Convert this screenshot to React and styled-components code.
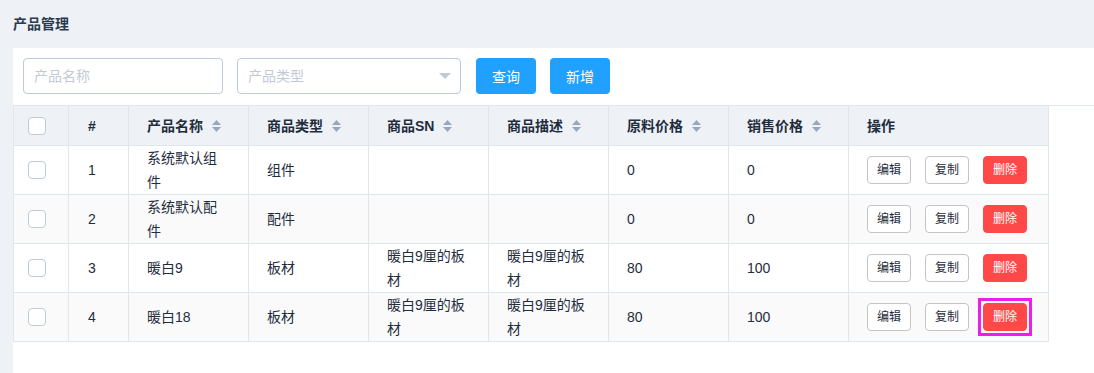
import React from "react";
import styled, { createGlobalStyle } from "styled-components";

const Global = createGlobalStyle`
  html, body { margin: 0; padding: 0; background: #eef1f6; }
  * { box-sizing: border-box; }
  body {
    font-family: "Liberation Sans", "Noto Sans CJK SC", sans-serif;
    color: #1f2d3d;
    font-size: 14px;
  }
`;

const Page = styled.div`
  padding-left: 13px;
  min-height: 100vh;
  display: flex;
  flex-direction: column;
`;

const Title = styled.h2`
  margin: 0;
  padding: 14px 0;
  font-size: 14px;
  line-height: 20px;
  font-weight: 700;
  color: #2b3a4d;
`;

const Panel = styled.div`
  flex: 1;
  background: #fff;
`;

const Toolbar = styled.div`
  display: flex;
  align-items: center;
  padding: 10px 10px 11px;
`;

const Field = styled.div`
  position: relative;
  width: ${(p) => p.$w}px;
  height: 36px;
  margin-right: ${(p) => p.$mr}px;
`;

const Input = styled.input`
  width: 100%;
  height: 100%;
  border: 1px solid #bfcbd9;
  border-radius: 4px;
  padding: 0 10px;
  font: inherit;
  font-size: 14px;
  color: #1f2d3d;
  outline: none;
  background: #fff;
  &::placeholder { color: #c3cad5; }
`;

const Caret = styled.svg`
  position: absolute;
  right: 10px;
  top: 15px;
`;

const PrimaryButton = styled.button`
  width: 60px;
  height: 36px;
  border: none;
  border-radius: 4px;
  background: #20a0ff;
  color: #fff;
  font: inherit;
  font-size: 14px;
  margin-right: 14px;
  padding: 0;
  cursor: pointer;
`;

const TableWrap = styled.div`
  border-top: 1px solid #dfe6ec;
`;

const Table = styled.table`
  border-collapse: separate;
  border-spacing: 0;
  table-layout: fixed;
  width: 1036px;
  border-left: 1px solid #dfe6ec;
`;

const Th = styled.th`
  width: ${(p) => p.$w}px;
  height: 40px;
  padding: 0 20px 0 ${(p) => p.$pl ?? 18}px;
  background: #eef1f6;
  border-right: 1px solid #dfe6ec;
  border-bottom: 1px solid #dfe6ec;
  text-align: left;
  font-weight: 700;
  font-size: 14px;
  line-height: 24px;
  color: #1f2d3d;
  white-space: nowrap;
`;

const HeadInner = styled.span`
  display: inline-flex;
  align-items: center;
  gap: 9px;
`;

const Tr = styled.tr`
  background: ${(p) => (p.$striped ? "#fafafa" : "#fff")};
`;

const Td = styled.td`
  height: 49px;
  padding: 0 20px 0 ${(p) => p.$pl ?? 18}px;
  border-right: 1px solid #dfe6ec;
  border-bottom: 1px solid #dfe6ec;
  font-size: 14px;
  line-height: 24px;
  color: #1f2d3d;
  vertical-align: middle;
  word-break: break-all;
`;

const Checkbox = styled.span`
  display: block;
  width: 18px;
  height: 18px;
  border: 1px solid #bfcbd9;
  border-radius: 4px;
  background: #fff;
`;

const Actions = styled.div`
  display: flex;
  align-items: center;
  gap: 14px;
  white-space: nowrap;
`;

const SmallButton = styled.button`
  width: 44px;
  height: 28px;
  padding: 0;
  border-radius: 4px;
  border: 1px solid ${(p) => (p.$danger ? "#ff4949" : "#c4c4c4")};
  background: ${(p) => (p.$danger ? "#ff4949" : "#fff")};
  color: ${(p) => (p.$danger ? "#fff" : "#1f2d3d")};
  font: inherit;
  font-size: 12px;
  cursor: pointer;
  outline: none;
`;

const FocusRing = styled.span`
  display: inline-flex;
  outline: ${(p) => (p.$on ? "3px solid #ee1ee9" : "none")};
  outline-offset: 2px;
`;

const SortIcon = () => (
  <svg width="9" height="12" viewBox="0 0 9 12">
    <polygon points="4.5,0 9,5 0,5" fill="#97a8be" />
    <polygon points="0,7 9,7 4.5,12" fill="#97a8be" />
  </svg>
);

const columns = [
  { key: "sel", w: 55, pl: 14 },
  { key: "idx", label: "#", w: 60, pl: 19 },
  { key: "name", label: "产品名称", w: 120, sort: true },
  { key: "type", label: "商品类型", w: 120, sort: true },
  { key: "sn", label: "商品SN", w: 120, sort: true },
  { key: "desc", label: "商品描述", w: 120, sort: true },
  { key: "cost", label: "原料价格", w: 120, sort: true },
  { key: "price", label: "销售价格", w: 120, sort: true },
  { key: "ops", label: "操作", w: 200 },
];

const rows = [
  { idx: 1, name: "系统默认组件", type: "组件", sn: "", desc: "", cost: "0", price: "0" },
  { idx: 2, name: "系统默认配件", type: "配件", sn: "", desc: "", cost: "0", price: "0" },
  { idx: 3, name: "暖白9", type: "板材", sn: "暖白9厘的板材", desc: "暖白9厘的板材", cost: "80", price: "100" },
  { idx: 4, name: "暖白18", type: "板材", sn: "暖白9厘的板材", desc: "暖白9厘的板材", cost: "80", price: "100" },
];

export default function App() {
  return (
    <>
      <Global />
      <Page>
        <Title>产品管理</Title>
        <Panel>
          <Toolbar>
            <Field $w={200} $mr={14}>
              <Input placeholder="产品名称" />
            </Field>
            <Field $w={224} $mr={15}>
              <Input placeholder="产品类型" readOnly />
              <Caret width="12" height="6" viewBox="0 0 12 6">
                <polygon points="0,0 12,0 6,6" fill="#bfcbd9" />
              </Caret>
            </Field>
            <PrimaryButton>查询</PrimaryButton>
            <PrimaryButton>新增</PrimaryButton>
          </Toolbar>
          <TableWrap>
            <Table>
              <thead>
                <tr>
                  {columns.map((c) => (
                    <Th key={c.key} $w={c.w} $pl={c.pl}>
                      {c.key === "sel" ? (
                        <Checkbox />
                      ) : (
                        <HeadInner>
                          {c.label}
                          {c.sort && <SortIcon />}
                        </HeadInner>
                      )}
                    </Th>
                  ))}
                </tr>
              </thead>
              <tbody>
                {rows.map((r, i) => (
                  <Tr key={r.idx} $striped={i % 2 === 1}>
                    <Td $pl={14}>
                      <Checkbox />
                    </Td>
                    <Td $pl={19}>{r.idx}</Td>
                    <Td>{r.name}</Td>
                    <Td>{r.type}</Td>
                    <Td>{r.sn}</Td>
                    <Td>{r.desc}</Td>
                    <Td>{r.cost}</Td>
                    <Td>{r.price}</Td>
                    <Td>
                      <Actions>
                        <SmallButton>编辑</SmallButton>
                        <SmallButton>复制</SmallButton>
                        <FocusRing $on={i === 3}>
                          <SmallButton $danger>删除</SmallButton>
                        </FocusRing>
                      </Actions>
                    </Td>
                  </Tr>
                ))}
              </tbody>
            </Table>
          </TableWrap>
        </Panel>
      </Page>
    </>
  );
}
